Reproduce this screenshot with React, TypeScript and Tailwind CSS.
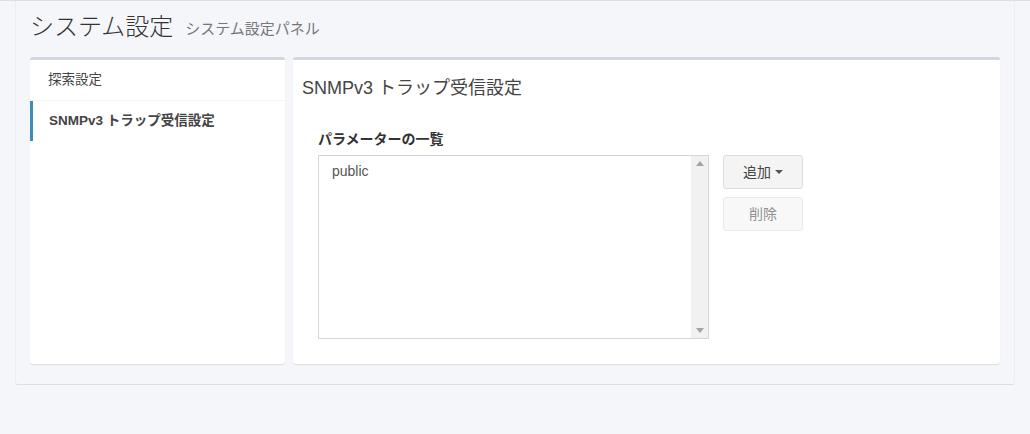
import { useState } from "react";

const font = { fontFamily: '"Liberation Sans", "Noto Sans CJK JP", sans-serif' };

export default function App() {
  const [active, setActive] = useState(1);
  const items = ["探索設定", "SNMPv3 トラップ受信設定"];

  return (
    <div className="min-h-[434px] bg-[#f5f6fa] border-t border-[#dcdfe4] text-[#333]" style={font}>
      {/* outer content wrapper */}
      <div className="mx-[15px] w-[1000px] px-[14px] pb-[20px] border-x border-b border-x-[#eceef2] border-b-[#dcdee3] rounded-b-[3px]">
        {/* Header */}
        <div className="flex items-end pt-[12px] h-[40px]">
          <h1 className="text-[24px] leading-[28px] font-light text-[#333]">システム設定</h1>
          <span className="ml-[12px] text-[15px] leading-[24px] text-[#777]">システム設定パネル</span>
        </div>

        <div className="mt-[16px] flex gap-[8px]">
          {/* side menu */}
          <div className="w-[255px] h-[307px] bg-white border-t-[3px] border-[#d2d6de] rounded-[3px] shadow-[0_1px_1px_rgba(0,0,0,0.1)]">
            {items.map((t, i) => (
              <div
                key={t}
                onClick={() => setActive(i)}
                className={
                  i === active
                    ? "h-[40px] flex items-center pl-[16px] border-l-[3px] border-[#3c8dbc] text-[13.5px] font-bold text-[#444] cursor-pointer"
                    : "h-[41px] flex items-center pl-[18px] border-b border-[#f4f4f4] text-[13.5px] text-[#444] cursor-pointer"
                }
              >
                {t}
              </div>
            ))}
          </div>

          {/* main panel */}
          <div className="w-[707px] h-[307px] bg-white border-t-[3px] border-[#d2d6de] rounded-[3px] shadow-[0_1px_1px_rgba(0,0,0,0.1)]">
            <div className="pt-[18px] pl-[9px]">
              <h3 className="text-[18px] leading-[20px] text-[#444]">SNMPv3 トラップ受信設定</h3>
            </div>
            <div className="pl-[25px] pt-[31px]">
              <div className="text-[14px] leading-[20px] font-bold text-[#333] mb-[6px]">パラメーターの一覧</div>
              <div className="flex gap-[14px]">
                {/* list box */}
                <div className="w-[391px] h-[184px] border border-[#d2d6de] flex">
                  <div className="flex-1 px-[13px] pt-[6px] text-[14px] leading-[18px] text-[#555]">public</div>
                  <div className="w-[17px] bg-[#f1f1f1] flex flex-col justify-between items-center py-[5px]">
                    <svg width="8" height="5" viewBox="0 0 8 5">
                      <path d="M4 0 L8 5 L0 5 Z" fill="#a3a3a3" />
                    </svg>
                    <svg width="8" height="5" viewBox="0 0 8 5">
                      <path d="M0 0 L8 0 L4 5 Z" fill="#a3a3a3" />
                    </svg>
                  </div>
                </div>
                {/* buttons */}
                <div className="flex flex-col gap-[8px]">
                  <button className="w-[80px] h-[34px] bg-[#f4f4f4] border border-[#ddd] rounded-[3px] text-[14px] text-[#444] flex items-center justify-center gap-[4px]">
                    追加
                    <svg width="8" height="4" viewBox="0 0 8 4">
                      <path d="M0 0 L8 0 L4 4 Z" fill="#555" />
                    </svg>
                  </button>
                  <button disabled className="w-[80px] h-[34px] bg-[#f4f4f4] border border-[#ddd] rounded-[3px] text-[14px] text-[#444] opacity-60">
                    削除
                  </button>
                </div>
              </div>
            </div>
          </div>
        </div>
      </div>
    </div>
  );
}
